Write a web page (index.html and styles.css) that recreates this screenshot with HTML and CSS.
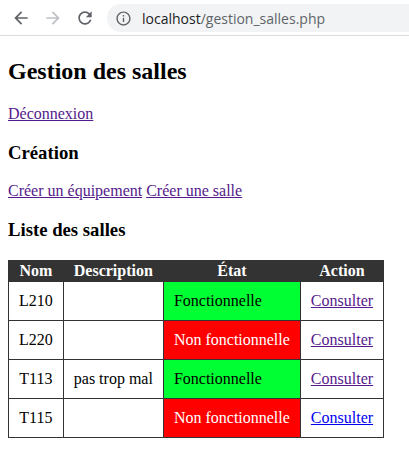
FILE: index.html
```html
<!DOCTYPE html>
<html lang="fr">
<head>
<meta charset="utf-8">
<title>Gestion des salles</title>
<link rel="stylesheet" href="styles.css">
</head>
<body>
<div class="chrome">
  <svg class="nav-icon" viewBox="0 0 24 24"><path d="M20 11H7.83l5.59-5.59L12 4l-8 8 8 8 1.41-1.41L7.83 13H20v-2z"/></svg>
  <svg class="nav-icon disabled" viewBox="0 0 24 24"><path d="M12 4l-1.41 1.41L16.170 11H4v2h12.17l-5.58 5.59L12 20l8-8z"/></svg>
  <svg class="nav-icon" viewBox="0 0 24 24"><path d="M17.65 6.35C16.2 4.9 14.21 4 12 4c-4.42 0-7.99 3.58-7.99 8s3.57 8 7.99 8c3.73 0 6.84-2.55 7.73-6h-2.08c-.82 2.33-3.04 4-5.65 4-3.31 0-6-2.69-6-6s2.690-6 6-6c1.66 0 3.14.69 4.22 1.78L13 11h7V4l-2.35 2.35z"/></svg>
  <div class="omnibox">
    <svg class="info-icon" viewBox="0 0 24 24"><path d="M11 7h2v2h-2zm0 4h2v6h-2zm1-9C6.48 2 2 6.48 2 12s4.48 10 10 10 10-4.48 10-10S17.52 2 12 2zm0 18c-4.41 0-8-3.59-8-8s3.59-8 8-8 8 3.59 8 8-3.59 8-8 8z"/></svg>
    <span class="url"><span class="host">localhost</span>/gestion_salles.php</span>
  </div>
</div>
<div class="page">
  <h2 class="title">Gestion des salles</h2>
  <p class="para"><a class="visited" href="#">Déconnexion</a></p>
  <h3 class="subtitle">Création</h3>
  <p class="para"><a class="visited" href="#">Créer un équipement</a> <a class="visited" href="#">Créer une salle</a></p>
  <h3 class="subtitle">Liste des salles</h3>
  <table class="rooms">
    <thead>
      <tr><th>Nom</th><th>Description</th><th>État</th><th>Action</th></tr>
    </thead>
    <tbody>
      <tr><td>L210</td><td></td><td class="state ok">Fonctionnelle</td><td><a class="visited" href="#">Consulter</a></td></tr>
      <tr><td>L220</td><td></td><td class="state ko">Non fonctionnelle</td><td><a class="visited" href="#">Consulter</a></td></tr>
      <tr><td>T113</td><td>pas trop mal</td><td class="state ok">Fonctionnelle</td><td><a class="visited" href="#">Consulter</a></td></tr>
      <tr><td>T115</td><td></td><td class="state ko">Non fonctionnelle</td><td><a class="link" href="#">Consulter</a></td></tr>
    </tbody>
  </table>
</div>
</body>
</html>
```
FILE: styles.css
```css
html, body {
  margin: 0;
  padding: 0;
  background: #fff;
}

body {
  font-family: "Liberation Serif", "Times New Roman", serif;
  font-size: 16px;
  color: #000;
}

.chrome {
  display: flex;
  align-items: center;
  gap: 12px;
  height: 35px;
  padding-left: 11px;
  border-bottom: 1px solid #dadce0;
  margin-bottom: 2px;
  overflow: hidden;
}

.nav-icon {
  width: 20px;
  height: 20px;
  flex: none;
  fill: #5f6368;
  margin-top: 1px;
}

.nav-icon.disabled {
  fill: #bdc1c6;
}

.omnibox {
  flex: 1;
  display: flex;
  align-items: center;
  gap: 10px;
  height: 28px;
  margin-top: 1px;
  border-radius: 14px 0 0 14px;
  background: #f1f3f4;
  padding-left: 8px;
  font-family: "Open Sans", "Noto Sans", sans-serif;
  font-size: 14px;
  color: #5f6368;
  white-space: nowrap;
}

.info-icon {
  width: 17px;
  height: 17px;
  fill: #5f6368;
  flex: none;
}

.host {
  color: #202124;
}

.page {
  margin: 0 8px 8px;
  display: flow-root;
}

.title {
  font-size: 24px;
  font-weight: bold;
  margin: 19.92px 0;
}

.subtitle {
  font-size: 18.72px;
  font-weight: bold;
  margin: 18.72px 0;
}

.para {
  margin: 16px 0;
}

a {
  color: #0000ee;
}

a.visited {
  color: #551a8b;
}

.rooms {
  border-collapse: collapse;
  border: 1px solid #333;
}

.rooms th {
  background: #333;
  color: #fff;
  font-weight: bold;
  line-height: 18px;
  padding: 1px 10px;
  border: 1px solid #333;
  text-align: center;
}

.rooms td {
  border: 1px solid #333;
  padding: 10px;
  line-height: 18px;
  text-align: center;
  white-space: nowrap;
}

.rooms td.state {
  text-align: left;
}

.rooms td.ok {
  background: #00ff33;
  color: #000;
}

.rooms td.ko {
  background: #ff0000;
  color: #fff;
}
```
